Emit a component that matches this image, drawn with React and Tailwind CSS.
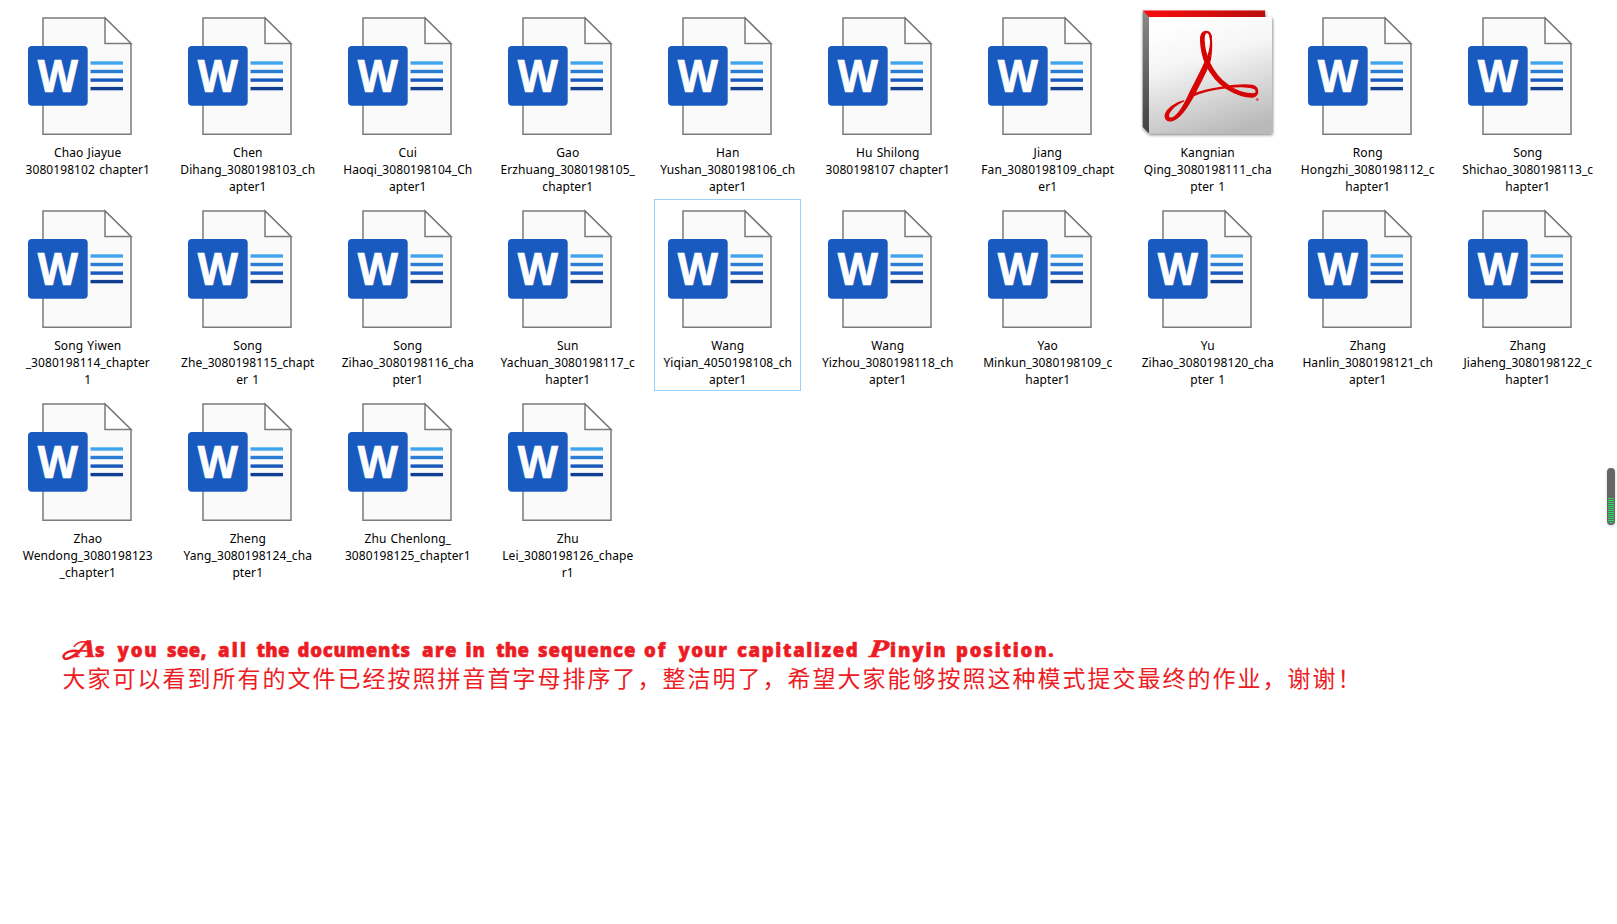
const docs = [
  ["Chao Jiayue", "3080198102 chapter1"],
  ["Chen", "Dihang_3080198103_ch", "apter1"],
  ["Cui", "Haoqi_3080198104_Ch", "apter1"],
  ["Gao", "Erzhuang_3080198105_", "chapter1"],
  ["Han", "Yushan_3080198106_ch", "apter1"],
  ["Hu Shilong", "3080198107 chapter1"],
  ["Jiang", "Fan_3080198109_chapt", "er1"],
  ["Kangnian", "Qing_3080198111_cha", "pter 1"],
  ["Rong", "Hongzhi_3080198112_c", "hapter1"],
  ["Song", "Shichao_3080198113_c", "hapter1"],
  ["Song Yiwen", "_3080198114_chapter", "1"],
  ["Song", "Zhe_3080198115_chapt", "er 1"],
  ["Song", "Zihao_3080198116_cha", "pter1"],
  ["Sun", "Yachuan_3080198117_c", "hapter1"],
  ["Wang", "Yiqian_4050198108_ch", "apter1"],
  ["Wang", "Yizhou_3080198118_ch", "apter1"],
  ["Yao", "Minkun_3080198109_c", "hapter1"],
  ["Yu", "Zihao_3080198120_cha", "pter 1"],
  ["Zhang", "Hanlin_3080198121_ch", "apter1"],
  ["Zhang", "Jiaheng_3080198122_c", "hapter1"],
  ["Zhao", "Wendong_3080198123", "_chapter1"],
  ["Zheng", "Yang_3080198124_cha", "pter1"],
  ["Zhu Chenlong_", "3080198125_chapter1"],
  ["Zhu", "Lei_3080198126_chape", "r1"],
];

const PDF_INDEX = 7;
const FOCUSED_INDEX = 14;

// [word, advance to the start of the next one, letter spacing]
const words = [
  ["you", 49.5, 1.9], ["see,", 51, 0.4], ["all", 38.5, 2.2], ["the", 41, 0.3], ["documents", 124.5, 0.75],
  ["are", 43.5, 1.4], ["in", 30.5, 1], ["the", 42, 0.3], ["sequence", 106, 1], ["of", 34.5, 1.9], ["your", 58.5, 1.4],
  ["capitalized", 131, 1.65],
];

function WordIcon() {
  return (
    <svg width="147" height="134" viewBox="0 0 147 134" className="block">
      <path d="M29 12H91L117 37.5V128.2H29Z" fill="#fafafa" stroke="#7b7b78" strokeWidth="1.5" />
      <path d="M91 12V37.5H117Z" fill="#fff" stroke="#7b7b78" strokeWidth="1.5" />
      <rect x="14" y="40" width="59.7" height="59.7" rx="4" fill="#185abd" />
      <text x="23.7" y="86.3" textLength="40.2" lengthAdjust="spacingAndGlyphs" className="font-['Open_Sans'] text-[45px] font-bold" fill="#fff" stroke="#fff" strokeWidth="0.7">W</text>
      <rect x="76.5" y="55.3" width="32.5" height="3.4" fill="#41a5ee" />
      <rect x="76.5" y="63.8" width="32.5" height="3.4" fill="#2b7cd3" />
      <rect x="76.5" y="72.4" width="32.5" height="3.4" fill="#185abd" />
      <rect x="76.5" y="80.9" width="32.5" height="3.4" fill="#103f91" />
    </svg>
  );
}

function AcrobatIcon() {
  return (
    <svg width="147" height="134" viewBox="0 0 147 134" className="block">
      <defs>
        <linearGradient id="face" x1="0.35" y1="0" x2="0.65" y2="1">
          <stop offset="0" stopColor="#fff" />
          <stop offset="0.35" stopColor="#f5f5f5" />
          <stop offset="1" stopColor="#b9b9b9" />
        </linearGradient>
        <linearGradient id="top" x1="0" y1="0" x2="1" y2="0">
          <stop offset="0" stopColor="#fa0f0f" />
          <stop offset="1" stopColor="#b90808" />
        </linearGradient>
        <linearGradient id="side" x1="0" y1="0" x2="0" y2="1">
          <stop offset="0" stopColor="#8a8a8a" />
          <stop offset="1" stopColor="#404040" />
        </linearGradient>
        <filter id="drop" x="-10%" y="-10%" width="120%" height="120%">
          <feDropShadow dx="0.5" dy="1.5" stdDeviation="1.5" floodOpacity="0.55" />
        </filter>
      </defs>
      <g filter="url(#drop)">
        <path d="M8.7 4.5L15 11V127.3L8.7 121Z" fill="url(#side)" />
        <path d="M8.7 4.5H131V11.3H15Z" fill="url(#top)" />
        <rect x="15" y="11" width="123" height="116.3" fill="url(#face)" />
      </g>
      <g transform="translate(4 -1.5) scale(.3333)" fill="#d60505" stroke="#d60505" strokeWidth="4" strokeLinejoin="round">
        <path d="M203 81C192 81 187 92 188 109C189 133 194 157 203 178C220 212 240 235 265 252C293 269 322 278 342 278C353 277 359 269 359 262C356 266 351 268 343 268C318 267 290 257 270 242C244 224 227 201 214 174C204 151 199 128 198 107C198 94 201 84 206 84C212 83 216 91 217 103H220C221 90 215 80 203 81Z" />
        <path d="M218 101C219 119 216 137 209 157L198 180C185 208 171 235 156 264C140 300 118 336 101 341C92 343 88 336 93 326C101 311 117 298 137 289C113 294 89 312 83 328C78 342 88 350 99 349C125 345 147 310 166 275C184 241 200 210 214 178C219 158 222 126 220 103Z" />
        <path d="M162 276C191 260 228 253 267 249C300 245 334 246 348 252C355 255 356 260 354 266L358 263C360 252 355 246 343 243C317 239 284 243 257 247C222 252 190 260 166 269Z" />
        <circle cx="358" cy="285" r="3.5" fill="#e66" strokeWidth="1" />
      </g>
    </svg>
  );
}

function Initial({ letter, className }) {
  return (
    <span className={"inline-block origin-bottom-left -skew-x-6 scale-x-125 font-['Liberation_Serif'] text-[25px] leading-none font-bold italic tracking-[0px] [-webkit-text-stroke:0.6px_#ed1c24] " + className}>
      {letter}
    </span>
  );
}

export default function App() {
  return (
    <div className="relative h-[924px] w-[1617px] overflow-hidden bg-white">
      <div className="grid grid-cols-[repeat(10,147px)] gap-x-[13px] gap-y-px pt-[6px] pl-[14px]">
        {docs.map((d, i) => (
          <div
            key={d[1]}
            className={i === FOCUSED_INDEX ? "h-[192px] outline -outline-offset-1 outline-[#99d1ff]" : "h-[192px]"}
          >
            {i === PDF_INDEX ? <AcrobatIcon /> : <WordIcon />}
            <div className="pt-[4px] pl-[0.5px] text-center font-['Noto_Sans'] text-[12px] leading-[17px] tracking-[0.08px] whitespace-nowrap text-black [word-spacing:1px]">
              {d.map((l) => <div key={l}>{l}</div>)}
            </div>
          </div>
        ))}
      </div>

      <div className="mt-[50px] ml-[62px] text-[#ed1c24]">
        <div className="flex h-[29px] items-baseline font-['Open_Sans'] text-[18.5px] leading-[32px] font-extrabold tracking-[1px] whitespace-nowrap [-webkit-text-stroke:0.6px_#ed1c24]">
          <div className="relative w-[55.5px] shrink-0 pl-[12px]">
            <svg width="34" height="22" viewBox="0 0 34 22" className="absolute top-[6px] left-0">
              <path d="M26 2C19 1 14 3 12 7" fill="none" stroke="currentColor" strokeWidth="1.5" />
              <path d="M18 12C11 9 3 12 1.5 16C1 21 9 19 15 13" fill="none" stroke="currentColor" strokeWidth="2.5" />
            </svg>
            <Initial letter="A" className="w-[21px]" />s
          </div>
          {words.map(([w, width, letterSpacing], i) => (
            <div key={i} className="shrink-0" style={{ width, letterSpacing }}>{w}</div>
          ))}
          <div className="w-[88px] shrink-0 tracking-[1.9px]">
            <Initial letter="P" className="w-[22px]" />inyin
          </div>
          <div className="tracking-[1.8px]">position.</div>
        </div>
        <div className="pl-[0.5px] font-['Noto_Sans_CJK_SC',sans-serif] text-[23px] leading-[28px] tracking-[2px] whitespace-nowrap">
          大家可以看到所有的文件已经按照拼音首字母排序了，整洁明了，希望大家能够按照这种模式提交最终的作业，谢谢！
        </div>
      </div>

      <div className="absolute top-[468px] left-[1607px] flex h-[57px] w-[8px] flex-col justify-end rounded-full bg-[#666] px-px pb-[2px] shadow-[0_1px_3px_rgba(0,0,0,0.2)]">
        <div className="h-[25px] rounded-b-full bg-[repeating-linear-gradient(to_bottom,#22e060_0_1px,#666_1px_2px)]" />
      </div>
    </div>
  );
}
